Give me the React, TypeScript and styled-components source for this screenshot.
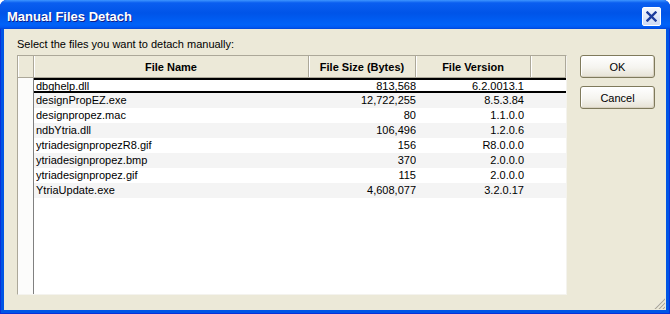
import React from "react";
import styled, { createGlobalStyle } from "styled-components";

const Global = createGlobalStyle`
  html, body { margin: 0; padding: 0; background: #ffffff; }
  body {
    width: 670px; height: 314px; overflow: hidden;
    font-family: "Liberation Sans", Arial, sans-serif;
  }
`;

const Window = styled.div`
  width: 670px;
  height: 314px;
  box-sizing: border-box;
  display: flex;
  flex-direction: column;
  background: #0055e5;
  border-radius: 7px 7px 0 0;
  overflow: hidden;
  box-shadow: inset 1px 0 0 #0831d9, inset -1px 0 0 #0831d9, inset 0 -1px 0 #0831d9;
`;

const TitleBar = styled.div`
  height: 29px;
  flex: none;
  box-sizing: border-box;
  display: flex;
  align-items: center;
  justify-content: space-between;
  padding: 3px 9px 0 7px;
  background: linear-gradient(
    to bottom,
    #3d95ff 0%,
    #0a5ef0 10%,
    #0054e8 45%,
    #0062f8 85%,
    #005af4 93%,
    #0046d8 100%
  );
`;

const Title = styled.span`
  color: #ffffff;
  font: bold 13px "Liberation Sans", Arial, sans-serif;
  text-shadow: 1px 1px 0 #0f1e8a;
`;

const CloseButton = styled.div`
  width: 19px;
  height: 19px;
  box-sizing: border-box;
  border: 1px solid #ffffff;
  border-radius: 2px;
  background: linear-gradient(#f2f6fd, #cddaf4);
  display: flex;
  align-items: center;
  justify-content: center;
`;

const Body = styled.div`
  flex: 1;
  position: relative;
  margin: 0 4px 4px 4px;
  background: #ece9d8;
  box-sizing: border-box;
  padding: 9px 11px 15px 13px;
  display: flex;
  flex-direction: column;
`;

const Label = styled.div`
  font-size: 11px;
  line-height: 13px;
  height: 13px;
  color: #000;
  margin-bottom: 4px;
`;

const Content = styled.div`
  flex: 1;
  display: flex;
  gap: 13px;
  align-items: flex-start;
`;

const GridBox = styled.div`
  width: 550px;
  height: 240px;
  box-sizing: border-box;
  border: 1px solid;
  border-color: #aca899 #f4f3ee #f4f3ee #aca899;
  background: #ffffff;
  display: flex;
  flex-direction: column;
`;

const HeaderRow = styled.div`
  height: 22px;
  flex: none;
  box-sizing: border-box;
  display: grid;
  grid-template-columns: 16px 275px 107px 115px 1fr;
  border-bottom: 1px solid #aca899;
  background: #ece9d8;
`;

const HeaderCell = styled.div`
  box-sizing: border-box;
  border-right: 1px solid #aca899;
  box-shadow: inset 1px 0 0 #ffffff;
  display: flex;
  align-items: center;
  justify-content: center;
  font: bold 11px "Liberation Sans", Arial, sans-serif;
  color: #000;
`;

const GridBody = styled.div`
  flex: 1;
  display: flex;
`;

const RowHeaderCol = styled.div`
  width: 16px;
  flex: none;
  box-sizing: border-box;
  border-right: 1px solid #808080;
  background: #fcfcfb;
`;

const Rows = styled.div`
  flex: 1;
  display: flex;
  flex-direction: column;
`;

const Row = styled.div<{ $alt: boolean; $selected: boolean }>`
  height: 15px;
  flex: none;
  box-sizing: border-box;
  display: grid;
  grid-template-columns: 275px 107px 115px 1fr;
  font-size: 11px;
  line-height: 15px;
  padding-top: ${(p) => (p.$selected ? 1 : 0)}px;
  color: #000;
  background: ${(p) => (p.$alt ? "#f4f4f4" : "#ffffff")};
  box-shadow: ${(p) =>
    p.$selected ? "inset 0 2px 0 #000, inset 0 -2px 0 #000" : "none"};
  white-space: nowrap;
  overflow: hidden;
`;

const Cell = styled.div<{ $align?: "left" | "right"; $padR?: number }>`
  text-align: ${(p) => p.$align ?? "left"};
  padding-left: ${(p) => (p.$align === "right" ? 0 : 2)}px;
  padding-right: ${(p) => p.$padR ?? 0}px;
  overflow: hidden;
`;

const ButtonCol = styled.div`
  display: flex;
  flex-direction: column;
  gap: 8px;
`;

const Button = styled.button`
  width: 75px;
  height: 23px;
  box-sizing: border-box;
  border: 1px solid #7f7a5c;
  border-radius: 3px;
  background: linear-gradient(#ffffff, #f5f4ef 55%, #e6e2d4);
  box-shadow: inset -1px -1px 0 #d8d2c2, inset 1px 1px 0 #ffffff;
  font: 11px "Liberation Sans", Arial, sans-serif;
  color: #000;
  padding: 0;
  margin: 0;
`;

const Grip = styled.div`
  position: absolute;
  right: 1px;
  bottom: 1px;
  width: 12px;
  height: 12px;
  display: flex;
`;

const data: [string, string, string][] = [
  ["dbghelp.dll", "813,568", "6.2.0013.1"],
  ["designPropEZ.exe", "12,722,255", "8.5.3.84"],
  ["designpropez.mac", "80", "1.1.0.0"],
  ["ndbYtria.dll", "106,496", "1.2.0.6"],
  ["ytriadesignpropezR8.gif", "156", "R8.0.0.0"],
  ["ytriadesignpropez.bmp", "370", "2.0.0.0"],
  ["ytriadesignpropez.gif", "115", "2.0.0.0"],
  ["YtriaUpdate.exe", "4,608,077", "3.2.0.17"],
];

export default function App() {
  return (
    <>
      <Global />
      <Window>
        <TitleBar>
          <Title>Manual Files Detach</Title>
          <CloseButton>
            <svg width="11" height="11" viewBox="0 0 11 11">
              <path d="M1.5 1.5 L9.5 9.5 M9.5 1.5 L1.5 9.5" stroke="#1c3c9c" strokeWidth="2.4" strokeLinecap="square" />
            </svg>
          </CloseButton>
        </TitleBar>
        <Body>
          <Label>Select the files you want to detach manually:</Label>
          <Content>
            <GridBox>
              <HeaderRow>
                <HeaderCell />
                <HeaderCell>File Name</HeaderCell>
                <HeaderCell>File Size (Bytes)</HeaderCell>
                <HeaderCell>File Version</HeaderCell>
                <HeaderCell />
              </HeaderRow>
              <GridBody>
                <RowHeaderCol />
                <Rows>
                  {data.map(([name, size, ver], i) => (
                    <Row key={name} $alt={i % 2 === 1} $selected={i === 0}>
                      <Cell>{name}</Cell>
                      <Cell $align="right" $padR={0}>{size}</Cell>
                      <Cell $align="right" $padR={7}>{ver}</Cell>
                      <Cell />
                    </Row>
                  ))}
                </Rows>
              </GridBody>
            </GridBox>
            <ButtonCol>
              <Button>OK</Button>
              <Button>Cancel</Button>
            </ButtonCol>
          </Content>
          <Grip>
            <svg width="12" height="12" viewBox="0 0 12 12">
              <path d="M11 2 L2 11 M11 6 L6 11 M11 10 L10 11" stroke="#ffffff" strokeWidth="1" />
              <path d="M12 2 L2 12 M12 6 L6 12 M12 10 L10 12" stroke="#aca899" strokeWidth="1.2" />
            </svg>
          </Grip>
        </Body>
      </Window>
    </>
  );
}
